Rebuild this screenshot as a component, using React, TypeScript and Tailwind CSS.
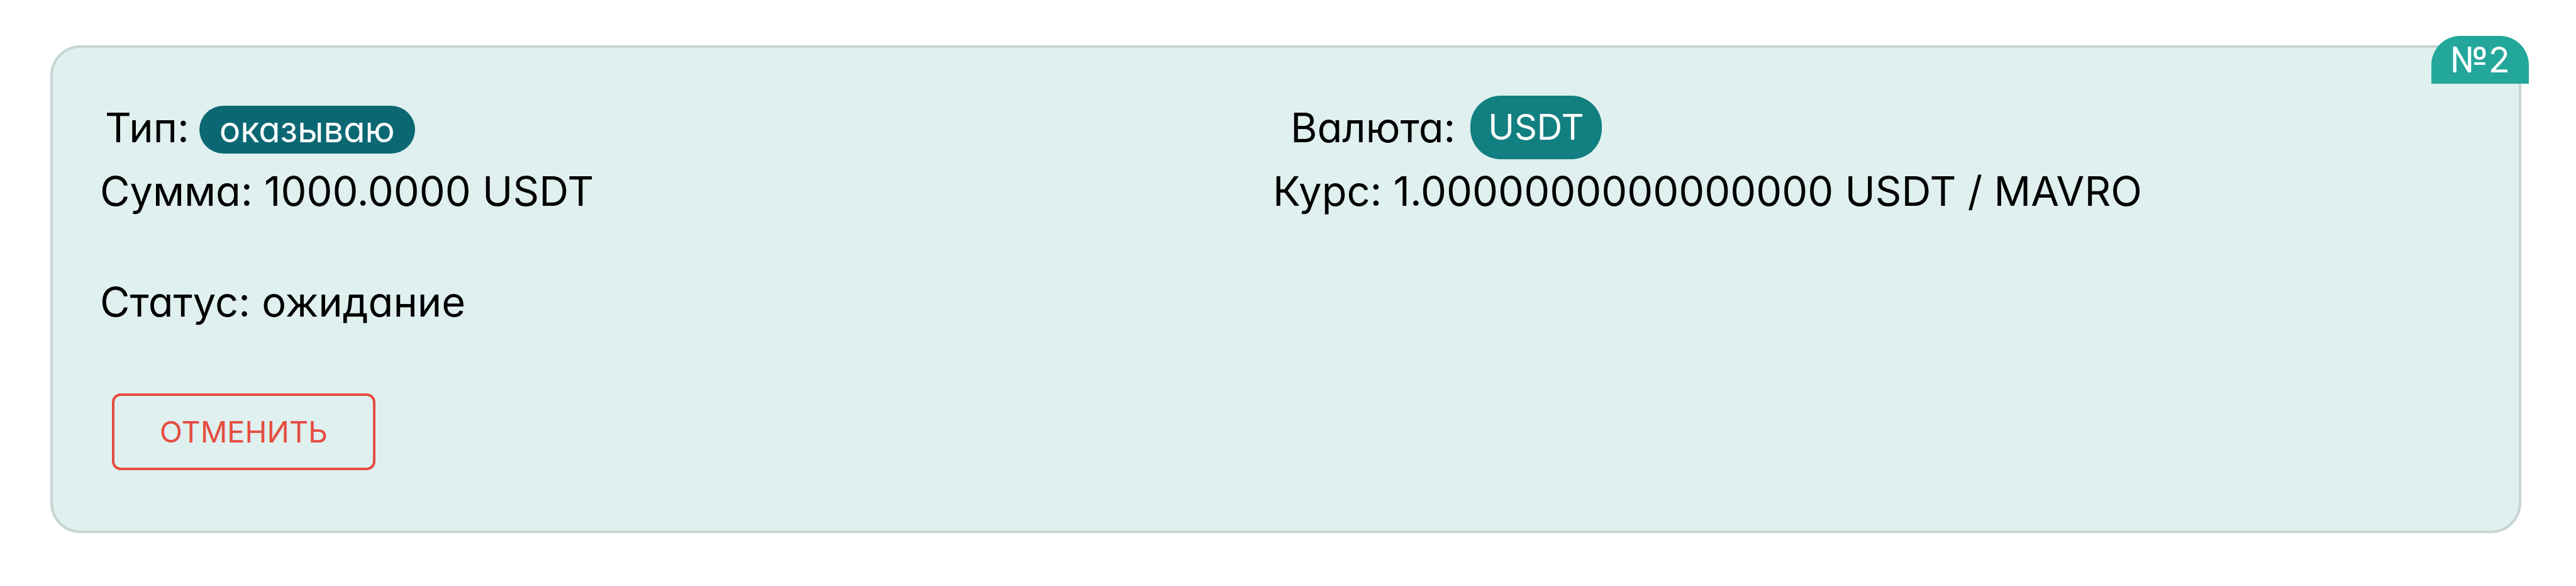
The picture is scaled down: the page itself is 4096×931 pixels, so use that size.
import type { ReactNode } from "react";

function Line({ label, children }: { label: string; children: ReactNode }) {
  return (
    <p>
      {label}: {children}
    </p>
  );
}

export default function App() {
  return (
    <main className="bg-white pt-[72px] pr-[87px] pb-[84px] pl-20 font-['Inter','Liberation_Sans',sans-serif] text-[65px] leading-[101px] text-black [font-feature-settings:'cv11']">
      <article className="relative rounded-[48px] border-4 border-[#c5d5d3] bg-[#dff0ef] pt-[76px] pr-[116px] pb-[96px] pl-[75px]">
        <span className="absolute -top-[19px] -right-4 rounded-t-[46px] bg-[#23a79b] px-[30px] text-[56px] leading-[76px] text-white">
          №2
        </span>
        <div className="grid grid-cols-2">
          <div className="flex items-baseline gap-4 pl-2">
            <span>Тип:</span>
            <span className="rounded-full bg-[#0b6873] px-8 text-[56px] leading-[76px] text-white">
              оказываю
            </span>
          </div>
          <div className="flex items-center gap-6 pl-7">
            <span>Валюта:</span>
            <span className="rounded-[48px] bg-[#127f80] px-7 text-[56px] text-white">USDT</span>
          </div>
          <Line label="Сумма">1000.0000 USDT</Line>
          <Line label="Курс">1.0000000000000000 USDT / MAVRO</Line>
        </div>
        <div className="mt-[75px]">
          <Line label="Статус">ожидание</Line>
        </div>
        <button
          type="button"
          className="mt-[95px] ml-[19px] block rounded-[14px] border-4 border-[#e54c40] px-[72px] text-[47px] leading-[114px] text-[#e54c40]"
        >
          ОТМЕНИТЬ
        </button>
      </article>
    </main>
  );
}
